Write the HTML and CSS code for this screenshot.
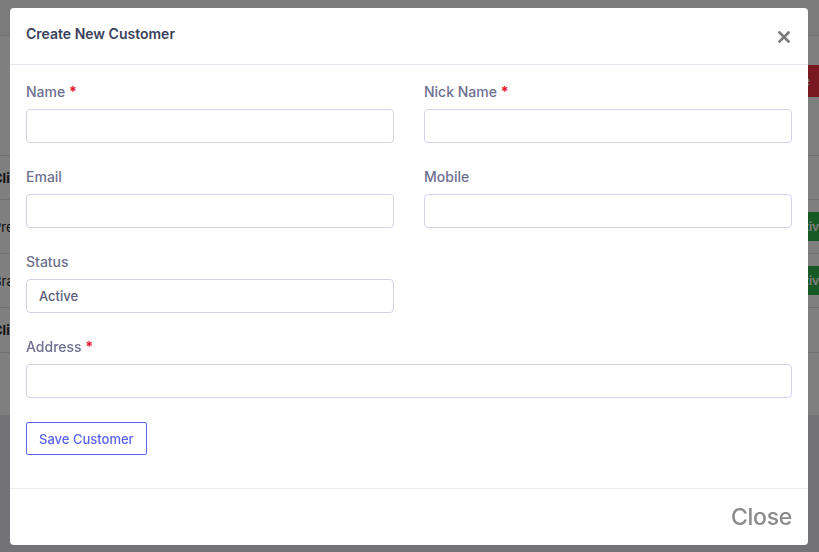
FILE: index.html
```html
<!DOCTYPE html>
<html lang="en">
<head>
    <meta charset="UTF-8">
    <meta name="viewport" content="width=device-width, initial-scale=1.0">
    <title>Customers</title>
    <link rel="stylesheet" href="styles.css">
</head>
<body>
    <div class="page">
        <div class="topbar"></div>
        <div class="panel">
            <div class="toolbar">
                <button class="btn-danger">Delete</button>
            </div>
            <div class="table">
                <div class="row head">
                    <div class="cell first">Client</div>
                    <div class="cell last"></div>
                </div>
                <div class="row">
                    <div class="cell first">Preston</div>
                    <div class="cell last"><span class="badge">Active</span></div>
                </div>
                <div class="row">
                    <div class="cell first">Bradley</div>
                    <div class="cell last"><span class="badge">Active</span></div>
                </div>
                <div class="row short">
                    <div class="cell first bold">Client</div>
                    <div class="cell last"></div>
                </div>
            </div>
        </div>
    </div>

    <div class="overlay">
        <div class="modal">
            <div class="modal-header">
                <h3>Create New Customer</h3>
                <button class="close-x" aria-label="Close">
                    <svg width="12" height="12" viewBox="0 0 12 12">
                        <path d="M1.5 1.5 L10.5 10.5 M10.5 1.5 L1.5 10.5" stroke="#7a7a7a" stroke-width="2.6" stroke-linecap="square"/>
                    </svg>
                </button>
            </div>

            <form class="modal-body">
                <div class="form-grid">
                    <div class="form-group">
                        <label for="name">Name <span class="req">*</span></label>
                        <input type="text" id="name" name="name">
                    </div>
                    <div class="form-group">
                        <label for="nick_name">Nick Name <span class="req">*</span></label>
                        <input type="text" id="nick_name" name="nick_name">
                    </div>
                    <div class="form-group">
                        <label for="email">Email</label>
                        <input type="email" id="email" name="email">
                    </div>
                    <div class="form-group">
                        <label for="mobile">Mobile</label>
                        <input type="tel" id="mobile" name="mobile">
                    </div>
                    <div class="form-group">
                        <label for="status">Status</label>
                        <div class="select" id="status">Active</div>
                    </div>
                    <div class="form-group"></div>
                    <div class="form-group full">
                        <label for="address">Address <span class="req">*</span></label>
                        <input type="text" id="address" name="address">
                    </div>
                </div>
                <button type="button" class="save-btn">Save Customer</button>
            </form>

            <div class="modal-footer">
                <button class="close-btn">Close</button>
            </div>
        </div>
    </div>
</body>
</html>
```

FILE: styles.css
```css
* {
    margin: 0;
    padding: 0;
    box-sizing: border-box;
}

html, body {
    overflow: hidden;
}

body {
    font-family: 'Inter', 'Noto Sans', sans-serif;
    background: #e6e6ee;
    width: 819px;
    height: 552px;
}

/* page behind the modal */
.page {
    width: 880px;
    margin-left: -30px;
}

.topbar {
    height: 36px;
    background: #f6f6f6;
    border-bottom: 1px solid #e2e2e2;
}

.panel {
    background: #fff;
    height: 379px;
}

.toolbar {
    height: 119px;
    display: flex;
    justify-content: flex-end;
    align-items: flex-start;
    padding-top: 29px;
    padding-right: 20px;
}

.btn-danger {
    background: #f03340;
    color: #fff;
    border: 0;
    border-radius: 3px;
    height: 32px;
    padding: 0 20px;
    font-size: 13px;
    font-family: inherit;
}

.row {
    display: flex;
    justify-content: space-between;
    align-items: center;
    height: 54px;
    border-top: 1px solid #e0e0e0;
}

.row.head {
    height: 44px;
    font-weight: 700;
}

.row.short {
    height: 46px;
    border-bottom: 1px solid #e0e0e0;
}

.cell {
    font-size: 13px;
    color: #222;
}

.cell.first {
    width: 120px;
    padding-left: 23px;
    white-space: nowrap;
}

.cell.bold {
    font-weight: 700;
}

.cell.last {
    width: 80px;
    padding-right: 18px;
    display: flex;
    justify-content: flex-end;
}

.badge {
    display: inline-block;
    background: #2fb24b;
    color: #fff;
    font-size: 12px;
    font-weight: 600;
    padding: 7px 6px;
    border-radius: 3px;
}

/* modal */
.overlay {
    position: fixed;
    top: 0;
    left: 0;
    right: 0;
    bottom: 0;
    background: rgba(0, 0, 0, 0.5);
    padding: 8px 0 0 10px;
}

.modal {
    width: 798px;
    height: 537px;
    background: #fff;
    border-radius: 4px;
    display: flex;
    flex-direction: column;
}

.modal-header {
    height: 57px;
    display: flex;
    justify-content: space-between;
    align-items: center;
    padding: 0 16px;
    border-bottom: 1px solid #e7e7ef;
}

.modal-header h3 {
    font-size: 14px;
    font-weight: 600;
    color: #3b3f5c;
    margin-top: -6px;
}

.close-x {
    background: none;
    border: 0;
    width: 14px;
    height: 14px;
    display: flex;
    align-items: center;
    justify-content: center;
    margin-right: 1px;
    margin-top: 1px;
}

.modal-body {
    flex: 1;
    padding: 17px 16px 0;
}

.form-grid {
    display: grid;
    grid-template-columns: 1fr 1fr;
    column-gap: 30px;
}

.form-group {
    margin-bottom: 24px;
}

.form-group.full {
    grid-column: 1 / 3;
}

.form-group label {
    display: block;
    height: 20px;
    line-height: 20px;
    margin-bottom: 7px;
    font-size: 14px;
    font-weight: 500;
    color: #6e7090;
}

.req {
    color: #e8112d;
    font-weight: 700;
}

.form-group input,
.select {
    display: block;
    width: 100%;
    height: 34px;
    border: 1px solid #d4d1e6;
    border-radius: 4px;
    background: #fff;
    font-family: inherit;
    font-size: 13px;
    color: #5b5e78;
    padding: 0 12px;
}

.select {
    line-height: 32px;
    font-weight: 500;
    margin-top: 1px;
}

.form-group.full input {
    margin-top: 1px;
}

.save-btn {
    height: 33px;
    padding: 0 12px;
    background: #fff;
    border: 1px solid #5c64f4;
    border-radius: 2px;
    color: #5a62f0;
    font-family: inherit;
    font-size: 13px;
    font-weight: 500;
}

.modal-footer {
    height: 57px;
    border-top: 1px solid #ececec;
    display: flex;
    justify-content: flex-end;
    align-items: center;
    padding: 0 16px;
}

.close-btn {
    background: none;
    border: 0;
    font-family: inherit;
    font-size: 23px;
    font-weight: 500;
    color: #8a8a8a;
    letter-spacing: -0.3px;
}
```
